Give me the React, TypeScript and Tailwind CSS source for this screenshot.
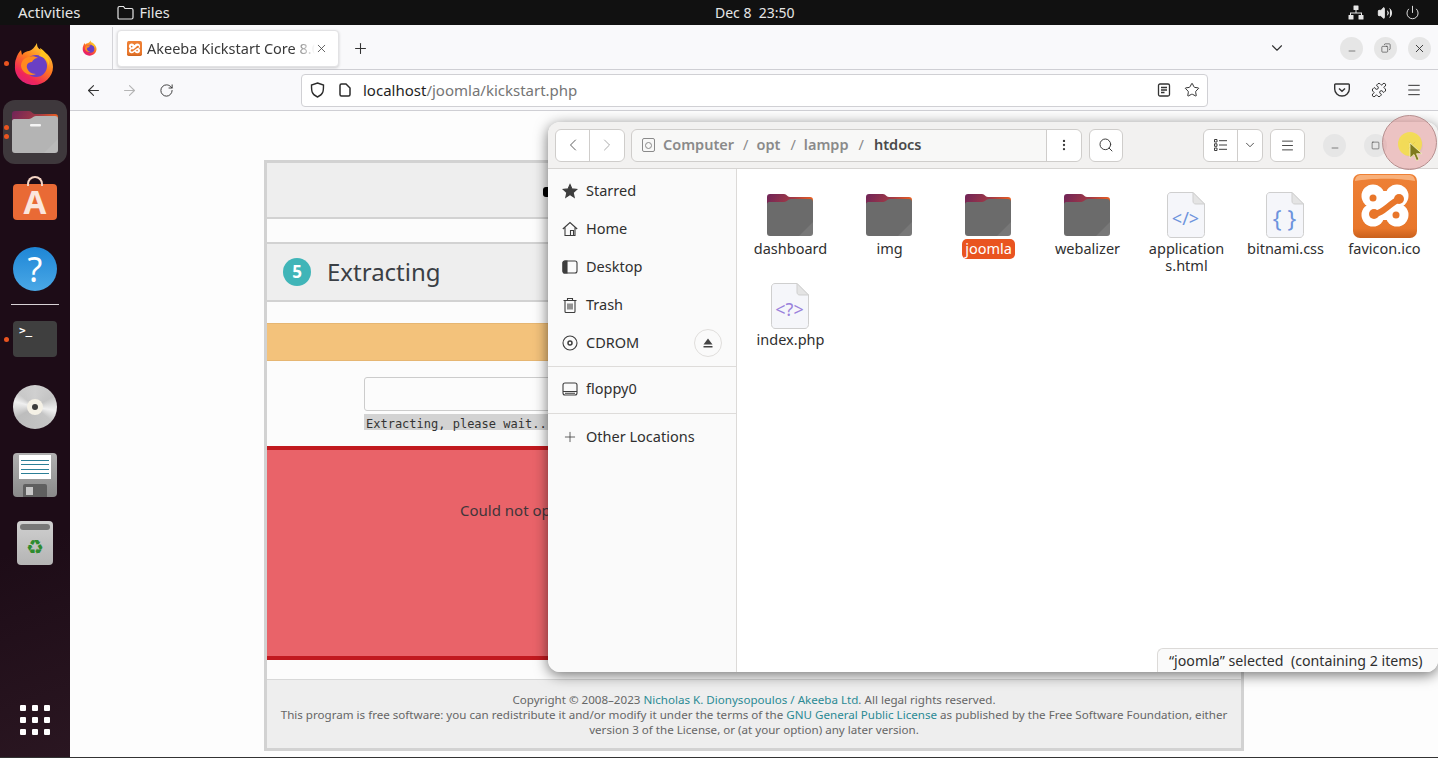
import {
  ArrowLeft,
  ArrowRight,
  ChevronDown,
  ChevronLeft,
  ChevronRight,
  Copy,
  EllipsisVertical,
  Menu,
  Minus,
  Plus,
  Power,
  Puzzle,
  RotateCw,
  Search,
  Square,
  Star,
  Volume2,
  X,
} from "lucide-react";

const sidebarTop = [
  { label: "Starred", icon: "star" },
  { label: "Home", icon: "home" },
  { label: "Desktop", icon: "desktop" },
  { label: "Trash", icon: "trash" },
];

const files = [
  { name: "dashboard", kind: "folder" },
  { name: "img", kind: "folder" },
  { name: "joomla", kind: "folder", selected: true },
  { name: "webalizer", kind: "folder" },
  { name: "application\ns.html", kind: "html" },
  { name: "bitnami.css", kind: "css" },
  { name: "favicon.ico", kind: "xampp" },
  { name: "index.php", kind: "php" },
];

function FirefoxLogo({ size }: { size: number }) {
  return (
    <svg width={size} height={size} viewBox="0 0 44 44">
      <defs>
        <linearGradient id={`ffa${size}`} x1="0.8" y1="0" x2="0.2" y2="1">
          <stop offset="0" stopColor="#ffe03c" />
          <stop offset="0.45" stopColor="#ff7a1f" />
          <stop offset="0.8" stopColor="#f0265a" />
          <stop offset="1" stopColor="#d9207e" />
        </linearGradient>
      </defs>
      <path
        d="M3 17c1-4 3-7 5-9l1 5c2-3 5-4 7-4 3-1 6-4 8-8 0 4 1 5 4 7 7 3 12 10 12 17 0 10-9 18-19 18C10 43 1 34 2 24c0-3 0-5 1-7z"
        fill={`url(#ffa${size})`}
      />
      <circle cx="23" cy="24" r="11" fill="#6a3fc4" />
      <path d="M11 17c4-3 10-4 14-1-3 0-5 2-6 4-3 0-6 2-5 6 1 3 4 6 9 6-6 3-14-1-15-8 0-3 1-5 3-7z" fill="#ff8a1f" />
      <path d="M27 6c5 3 10 9 9 18-1-6-5-9-10-10 2-2 2-5 1-8z" fill="#ffc41f" />
    </svg>
  );
}

function FolderIcon({ dark }: { dark?: boolean }) {
  const id = dark ? "folder-dark" : "folder-tile";
  return (
    <svg width="46" height="42" viewBox="0 0 46 42">
      <defs>
        <linearGradient id={id} x1="0" y1="0" x2="1" y2="0.25">
          <stop offset="0" stopColor="#6f2458" />
          <stop offset="0.6" stopColor="#a33a45" />
          <stop offset="1" stopColor="#ea5f20" />
        </linearGradient>
      </defs>
      <path d="M3 0h14c3 0 3 3 6 3h20c2 0 3 1 3 3v12H0V3c0-2 1-3 3-3z" fill={`url(#${id})`} />
      <path
        d="M0 10c0-1 1-2 2-2h15c3 0 4-3 7-3h19c2 0 3 1 3 3v31c0 2-1 3-3 3H3c-2 0-3-1-3-3z"
        fill={dark ? "#6b6b6b" : "#b4b4b4"}
      />
      <path d="M46 28v11c0 2-1 3-3 3H32z" fill="#fff" opacity="0.09" />
      {!dark && <rect x="18" y="13" width="11" height="2.5" rx="1" fill="#f4f4f4" />}
    </svg>
  );
}

function DocIcon({ kind }: { kind: string }) {
  const color = kind === "php" ? "#9a82dc" : "#6d93dd";
  const label = kind === "php" ? "<?>" : kind === "css" ? "{ }" : "</>";
  return (
    <div className="relative mr-[2px] h-[46px] w-[38px]">
      <svg width="38" height="46" viewBox="0 0 38 46" className="absolute inset-0">
        <path
          d="M4 .5h22L37.5 12v29.5c0 2-1.500 4-3.500 4H4c-2 0-3.500-2-3.500-4V4C.5 2 2 .5 4 .5z"
          fill="#f5f6fa"
          stroke="#cfcfcf"
        />
        <path d="M26 .5V9c0 2 1 3 3 3h8.500z" fill="#e4e4e4" stroke="#cfcfcf" />
      </svg>
      <span
        className={`absolute inset-x-0 top-[14px] text-center leading-[24px] whitespace-nowrap ${
          kind === "css" ? "text-[23px]" : "text-[18px]"
        }`}
        style={{ color }}
      >
        {label}
      </span>
    </div>
  );
}

function XamppIcon({ size, flat }: { size: number; flat?: boolean }) {
  const id = flat ? "xampp-small" : "xampp-large";
  return (
    <svg width={size} height={size} viewBox="0 0 64 64">
      <defs>
        <linearGradient id={id} x1="0" y1="0" x2="0" y2="1">
          <stop offset="0" stopColor="#ee8136" />
          <stop offset="0.85" stopColor="#e8762a" />
          <stop offset="1" stopColor="#c9601c" />
        </linearGradient>
      </defs>
      <rect width="64" height="64" rx="7" fill={`url(#${id})`} />
      {!flat && <path d="M8 1h48c3 0 6 2 6 6-16-3-44-3-60 0 0-4 3-6 6-6z" fill="#f8b07a" />}
      <g fill="#fff">
        <circle cx="20" cy="22" r="11.500" />
        <circle cx="44" cy="22" r="11.500" />
        <circle cx="20" cy="41" r="11.500" />
        <circle cx="44" cy="41" r="11.500" />
        <rect x="16" y="17" width="32" height="29" />
      </g>
      <g fill="#e8762a">
        <circle cx="20" cy="24" r="3.500" />
        <circle cx="21" cy="40" r="5" />
        <circle cx="46" cy="25" r="5" />
        <circle cx="43" cy="41" r="3.500" />
      </g>
      <path d="M21 40C29 40 35 31 46 25" fill="none" stroke="#e8762a" strokeWidth="6" />
    </svg>
  );
}

function WindowButton({ children, size = "w-[23px] h-[23px]" }: { children: React.ReactNode; size?: string }) {
  return <div className={`${size} rounded-full bg-[#e6e6e6] grid place-items-center text-[#3d3d3d]`}>{children}</div>;
}

function TopBar() {
  return (
    <div className="relative flex h-[25px] shrink-0 items-center bg-[#111111] text-[15px] text-[#e6e6e6]">
      <span className="ml-[18px]">Activities</span>
      <svg width="17" height="15" viewBox="0 0 17 15" fill="none" stroke="#e6e6e6" strokeWidth="1.200" className="ml-[36px]">
        <path d="M1 3c0-1 .6-1.500 1.500-1.500h4L8 3.500h6.500c1 0 1.500.5 1.500 1.500v7.500c0 1-.5 1.500-1.500 1.500h-12C1.600 14 1 13.500 1 12.500z" />
      </svg>
      <span className="ml-[6px] text-[14.500px]">Files</span>
      <span className="absolute left-[715px] whitespace-pre text-[14px]">Dec 8  23:50</span>
      <div className="ml-auto mr-[18px] flex items-center">
        <svg width="16" height="15" viewBox="0 0 16 15" fill="#e6e6e6">
          <rect x="5.500" y="0.500" width="5" height="4.500" rx="0.500" />
          <rect x="0.500" y="10" width="5" height="4.500" rx="0.500" />
          <rect x="10.500" y="10" width="5" height="4.500" rx="0.500" />
          <path d="M7.500 5h1v2.500H14V10h-1V8.500H3V10H2V7.500h5.500z" />
        </svg>
        <Volume2 className="ml-[13px] h-[16px] w-[16px]" fill="#e6e6e6" strokeWidth={1.5} />
        <Power className="ml-[12px] h-[15px] w-[15px]" strokeWidth={1.5} />
      </div>
    </div>
  );
}

function Dock() {
  return (
    <aside className="relative flex w-[70px] shrink-0 flex-col items-center bg-[linear-gradient(160deg,#1d0c17_70%,#2a1621_100%)] pt-[17px]">
      <span className="absolute left-[4px] top-[36px] h-[5px] w-[5px] rounded-full bg-[#e95420]" />
      <span className="absolute left-[4px] top-[100px] h-[5px] w-[5px] rounded-full bg-[#e95420]" />
      <span className="absolute left-[4px] top-[109px] h-[5px] w-[5px] rounded-full bg-[#e95420]" />
      <span className="absolute left-[4px] top-[312px] h-[5px] w-[5px] rounded-full bg-[#e95420]" />
      <FirefoxLogo size={44} />
      <div className="mt-[14px] grid h-[64px] w-[64px] place-items-center rounded-[12px] bg-[#3e383c]">
        <FolderIcon />
      </div>
      <div className="relative mt-[12px] flex h-[44px] w-[44px] flex-col items-center justify-end">
        <div className="absolute top-0 h-[10px] w-[16px] rounded-t-[8px] border-2 border-b-0 border-[#f5d5c4]" />
        <div className="grid h-[36px] w-[44px] place-items-center rounded-[4px] bg-[#e96a35]">
          <span className="text-[33px] font-bold leading-[36px] text-[#fbe6dc]">A</span>
        </div>
      </div>
      <div className="mt-[27px] grid h-[44px] w-[44px] place-items-center rounded-full bg-[linear-gradient(180deg,#1e86d6,#4aa8e6)]">
        <span className="text-[34px] leading-[40px] text-white">?</span>
      </div>
      <div className="mt-[13px] h-px w-[48px] bg-[#d8d2d6]" />
      <div className="mt-[16px] h-[36px] w-[44px] rounded-[4px] bg-[#3f3f3f] pl-[6px] font-['DejaVu_Sans_Mono',monospace] text-[11px] font-bold leading-[20px] text-white">
        &gt;_
      </div>
      <div className="mt-[28px] grid h-[44px] w-[44px] place-items-center rounded-full bg-[conic-gradient(#d0d0d0_0deg,#c4c4c4_60deg,#f0f0f0_100deg,#c6c6c6_130deg,#bdbdbd_240deg,#f0f0f0_285deg,#c8c8c8_310deg,#d0d0d0_360deg)]">
        <div className="grid h-[16px] w-[16px] place-items-center rounded-full bg-[#f5f1e6]">
          <div className="h-[6px] w-[6px] rounded-full bg-[#3c3c3c]" />
        </div>
      </div>
      <div className="relative mt-[24px] h-[44px] w-[44px] rounded-[4px] bg-[linear-gradient(180deg,#b0b0b0,#8a8a8a)]">
        <div className="mx-auto mt-[2px] flex h-[24px] w-[32px] flex-col justify-evenly bg-white py-[2px]">
          <div className="mx-[2px] h-px bg-[#2b7f97]" />
          <div className="mx-[2px] h-px bg-[#2b7f97]" />
          <div className="mx-[2px] h-px bg-[#2b7f97]" />
          <div className="mx-[2px] h-px bg-[#2b7f97]" />
        </div>
        <div className="absolute bottom-0 left-[10px] h-[13px] w-[24px] rounded-t-[2px] bg-[#5f5f5f]">
          <div className="ml-[3px] mt-[3px] h-[8px] w-[7px] bg-[#c8c8c8]" />
        </div>
      </div>
      <div className="mt-[24px] flex h-[44px] w-[36px] flex-col items-center rounded-[4px] bg-[linear-gradient(180deg,#d0d0d0,#b4b4b4)] pt-[3px]">
        <div className="h-[6px] w-[30px] rounded-[3px] bg-[#777777]" />
        <span className="mt-[7px] text-[20px] leading-[20px] text-[#2e8b2e]">♻</span>
      </div>
      <div className="mt-auto mb-[22px] grid grid-cols-3 gap-[6px]">
        {Array.from({ length: 9 }).map((_, i) => (
          <div key={i} className="h-[6px] w-[6px] rounded-[1px] bg-white" />
        ))}
      </div>
    </aside>
  );
}

function BrowserChrome() {
  return (
    <>
      <div className="flex h-[45px] shrink-0 items-center border-b border-[#cfcfd4] bg-[#f9f9fb] pt-[2px]">
        <div className="ml-[12px] w-[30px]">
          <FirefoxLogo size={16} />
        </div>
        <div className="h-[42px] w-px bg-[#d4d4d8]" />
        <div className="ml-[4px] flex h-[37px] w-[222px] items-center rounded-[4px] border border-[#e2e2e4] bg-white pl-[9px] shadow-[0_1px_3px_rgba(0,0,0,0.18)]">
          <XamppIcon size={15} flat />
          <span className="ml-[5px] w-[168px] overflow-hidden whitespace-nowrap pt-px text-[14.500px] text-[#3a3a3a] [mask-image:linear-gradient(90deg,#000_92%,transparent_100%)]">
            Akeeba Kickstart Core <span className="text-[#9a9a9a]">8.0.1</span>
          </span>
          <X className="h-[13px] w-[13px] text-[#444444]" strokeWidth={1.5} />
        </div>
        <Plus className="ml-[13px] h-[17px] w-[17px] text-[#333333]" strokeWidth={1.5} />
        <ChevronDown className="ml-[899px] h-[18px] w-[18px] text-[#333333]" strokeWidth={1.5} />
        <div className="ml-[54px] flex gap-[11px]">
          <WindowButton>
            <Minus className="mt-[6px] h-[10px] w-[10px]" strokeWidth={1.5} />
          </WindowButton>
          <WindowButton>
            <Copy className="h-[10px] w-[10px] -scale-x-100" strokeWidth={1.5} />
          </WindowButton>
          <WindowButton>
            <X className="h-[13px] w-[13px]" strokeWidth={1.8} />
          </WindowButton>
        </div>
      </div>
      <div className="flex h-[41px] shrink-0 items-center border-b border-[#cfcfd4] bg-[#f9f9fb] text-[#333333]">
        <ArrowLeft className="ml-[15px] h-[17px] w-[17px]" strokeWidth={1.5} />
        <ArrowRight className="ml-[19px] h-[17px] w-[17px] text-[#b5b5b5]" strokeWidth={1.5} />
        <RotateCw className="ml-[21px] h-[15px] w-[15px]" strokeWidth={1.5} />
        <div className="ml-[127px] flex h-[33px] w-[907px] items-center rounded-[4px] border border-[#d0d0d4] bg-white pl-[8px]">
          <svg width="15" height="16" viewBox="0 0 15 16" fill="none" stroke="#2b2b2b" strokeWidth="1.400">
            <path d="M7.500 1 13.500 3c0 6 0 9.500-6 12C1.500 12.500 1.500 9 1.500 3z" />
          </svg>
          <svg width="12" height="14" viewBox="0 0 12 14" fill="none" stroke="#2b2b2b" strokeWidth="1.500" className="ml-[14px]">
            <path d="M1 2.500C1 1.500 1.500 1 2.500 1H7l4 4v6.500c0 1-.5 1.500-1.500 1.500h-7C1.500 13 1 12.500 1 11.500z" />
          </svg>
          <span className="ml-[12px] text-[15px]">
            <span className="text-[#1f1f1f]">localhost</span>
            <span className="text-[#757575]">/joomla/kickstart.php</span>
          </span>
          <svg width="14" height="14" viewBox="0 0 14 14" fill="none" stroke="#333" strokeWidth="1.300" className="ml-auto">
            <rect x="1.500" y="1" width="11" height="12" rx="1.500" />
            <path d="M4 4.500h6M4 7h6M4 9.500h3.500" />
          </svg>
          <Star className="ml-[13px] mr-[7px] h-[16px] w-[16px]" strokeWidth={1.5} />
        </div>
        <svg width="16" height="14" viewBox="0 0 16 14" fill="none" stroke="#333" strokeWidth="1.400" className="ml-[126px]">
          <path d="M1.500 1h13c.5 0 .8.3.8.8V6a7.300 7 0 0 1-14.600 0V1.800c0-.5.3-.8.8-.8z" />
          <path d="M5 5.500 8 8.300l3-2.800" />
        </svg>
        <Puzzle className="ml-[21px] h-[16px] w-[16px]" strokeWidth={1.5} />
        <Menu className="ml-[19px] h-[16px] w-[16px]" strokeWidth={1.5} />
      </div>
    </>
  );
}

function KickstartPage() {
  return (
    <div className="min-h-0 flex-1 overflow-hidden bg-[#fdfdfd] pt-[49px]">
      <div className="mx-auto flex h-[591px] w-[980px] flex-col border-[3px] border-[#d2d2d2] bg-[#fcfcfc]">
        <div className="box-content h-[54px] shrink-0 border-b-2 border-[#d2d2d2] bg-[#eeeeee] pl-[276px] pt-0">
          <div className="mt-[24px] h-[10px] w-[5px] rounded-l-[3px] bg-black" />
        </div>
        <div className="h-[23px] shrink-0" />
        <div className="box-content flex h-[56px] shrink-0 items-center border-y-2 border-[#d2d2d2] bg-[#eeeeee]">
          <div className="ml-[16px] grid h-[28px] w-[28px] place-items-center rounded-full bg-[#40b5b8] text-[17px] font-bold text-white">
            5
          </div>
          <span className="ml-[16px] text-[24px] leading-none text-[#3a3f45]">Extracting</span>
        </div>
        <div className="h-[21px] shrink-0" />
        <div className="h-[38px] shrink-0 border-y border-[#e6b672] bg-[#f3c27b]" />
        <div className="flex h-[85px] shrink-0 flex-col pl-[97px] pt-[16px]">
          <div className="h-[34px] w-[780px] rounded-[3px] border border-[#cccccc] bg-[#fcfcfc]" />
          <div className="mt-[3px] h-[16px] w-fit bg-[#d3d3d3] pl-[2px] pt-px font-['DejaVu_Sans_Mono',monospace] text-[12px] leading-[18px] text-[#333333]">
            Extracting, please wait...
          </div>
        </div>
        <div className="h-[214px] shrink-0 border-y-4 border-[#c1191f] bg-[#e96369] pl-[193px] pt-[48px] text-[15px] leading-[24px] text-[#40363a] whitespace-nowrap">
          Could not open the archive
        </div>
        <div className="h-[19px] shrink-0" />
        <footer className="flex flex-1 flex-col items-center border-t border-[#d8d8d8] bg-[#eeeeee] pt-[12px] text-center text-[11.600px] leading-[15px] text-[#666666]">
          <p>
            Copyright © 2008–2023 <span className="text-[#2b8a94]">Nicholas K. Dionysopoulos / Akeeba Ltd</span>. All legal rights reserved.
          </p>
          <p className="w-[960px]">
            This program is free software: you can redistribute it and/or modify it under the terms of the{" "}
            <span className="text-[#2b8a94]">GNU General Public License</span> as published by the Free Software Foundation, either version 3 of the
            License, or (at your option) any later version.
          </p>
        </footer>
      </div>
    </div>
  );
}

function SidebarIcon({ icon }: { icon: string }) {
  const common = { width: 16, height: 16, viewBox: "0 0 16 16", fill: "none", stroke: "#3d3d3d", strokeWidth: 1.1 };
  if (icon === "star")
    return (
      <svg {...common} fill="#3d3d3d">
        <path d="m8 1.500 2 4.400 4.800.5-3.600 3.200 1 4.700L8 11.500l-4.200 2.800 1-4.700L1.200 6.400 6 5.900z" />
      </svg>
    );
  if (icon === "home")
    return (
      <svg {...common}>
        <path d="M.8 8 8 1.500 15.200 8M3 6.500v8h10v-8M8.500 14.500v-5h3v5" />
      </svg>
    );
  if (icon === "desktop")
    return (
      <svg {...common}>
        <rect x="1" y="2" width="14" height="12" rx="2" />
        <path d="M1 4c0-1 1-2 2-2h2v12H3c-1 0-2-1-2-2z" fill="#3d3d3d" />
      </svg>
    );
  if (icon === "trash")
    return (
      <svg {...common}>
        <path d="M1.500 3.500h13M5.500 3.500V1.500h5v2M3 3.500v11c0 .5.500 1 1 1h8c.5 0 1-.5 1-1v-11M6 6.500v6M8 6.500v6M10 6.500v6" />
      </svg>
    );
  if (icon === "disc")
    return (
      <svg {...common}>
        <circle cx="8" cy="8" r="7" />
        <circle cx="8" cy="8" r="2" strokeWidth="1.500" />
      </svg>
    );
  return (
    <svg {...common}>
      <rect x="1" y="2" width="14" height="12" rx="2" />
      <path d="M1 10.500h14M3 12.300h10" />
    </svg>
  );
}

function SidebarRow({ label, icon, className = "" }: { label: string; icon: string; className?: string }) {
  return (
    <div className={`flex h-[38px] items-center pl-[14px] text-[14.500px] text-[#2f2f2f] ${className}`}>
      <SidebarIcon icon={icon} />
      <span className="ml-[8px]">{label}</span>
    </div>
  );
}

function FileCell({ file }: { file: (typeof files)[number] }) {
  return (
    <div className="flex flex-col items-center">
      <div className="grid h-[64px] w-[64px] shrink-0 items-end justify-items-center">
        {file.kind === "folder" && (
          <div className="mb-[2px] mr-[2px]">
            <FolderIcon dark />
          </div>
        )}
        {file.kind === "xampp" && <XamppIcon size={64} />}
        {(file.kind === "html" || file.kind === "css" || file.kind === "php") && <DocIcon kind={file.kind} />}
      </div>
      <span
        className={`mt-px whitespace-pre-line px-[3px] pb-[2px] pt-px text-center text-[14.500px] leading-[17px] ${
          file.selected ? "rounded-[5px] bg-[#e95420] text-white" : "text-[#2f2f2f]"
        }`}
      >
        {file.name}
      </span>
    </div>
  );
}

function FilesWindow() {
  return (
    <div className="absolute left-[548px] top-[122px] flex h-[550px] w-[890px] flex-col overflow-hidden rounded-[12px] bg-[#fafafa] shadow-[0_3px_14px_rgba(0,0,0,0.55)]">
      <div className="flex h-[47px] shrink-0 items-center border-b border-[#d6d4d2] bg-[#f2f1f0] text-[#3d3d3d]">
        <div className="ml-[7px] flex h-[33px] w-[70px] rounded-[6px] border border-[#cfcdcb] bg-white">
          <div className="grid w-[34px] place-items-center border-r border-[#cfcdcb]">
            <ChevronLeft className="h-[20px] w-[20px]" strokeWidth={1} />
          </div>
          <div className="grid flex-1 place-items-center text-[#9a9a9a]">
            <ChevronRight className="h-[20px] w-[20px]" strokeWidth={1} />
          </div>
        </div>
        <div className="ml-[6px] flex h-[33px] w-[451px] items-center rounded-[6px] border border-[#cfcdcb] bg-[#f8f8f7] pl-[10px] text-[14.500px] font-semibold">
          <div className="grid h-[14px] w-[13px] place-items-center rounded-[2px] border border-[#8a8a8a]">
            <div className="h-[7px] w-[7px] rounded-full border border-[#8a8a8a]" />
          </div>
          <span className="ml-[8px] text-[#8a8a8a]">Computer</span>
          <span className="ml-[9px] font-normal text-[#8a8a8a]">/</span>
          <span className="ml-[8px] text-[#8a8a8a]">opt</span>
          <span className="ml-[10px] font-normal text-[#8a8a8a]">/</span>
          <span className="ml-[8px] text-[#8a8a8a]">lampp</span>
          <span className="ml-[10px] font-normal text-[#8a8a8a]">/</span>
          <span className="ml-[10px] text-[#4a4a4a]">htdocs</span>
          <div className="ml-auto grid h-full w-[35px] place-items-center rounded-r-[6px] border-l border-[#cfcdcb] bg-white">
            <EllipsisVertical className="h-[14px] w-[14px]" strokeWidth={2} />
          </div>
        </div>
        <div className="ml-[7px] grid h-[33px] w-[34px] place-items-center rounded-[6px] border border-[#cfcdcb] bg-white">
          <Search className="h-[16px] w-[16px]" strokeWidth={1.5} />
        </div>
        <div className="ml-[80px] flex h-[33px] w-[60px] rounded-[6px] border border-[#cfcdcb] bg-white">
          <div className="grid w-[34px] place-items-center border-r border-[#cfcdcb]">
            <svg width="13" height="12" viewBox="0 0 13 12" fill="none" stroke="#3d3d3d">
              <path d="M.5.500h2.500V3H.5zM.5 4.800h2.500v2.500H.5zM.5 9h2.500v2.500H.5zM5 1.700h8M5 6h8M5 10.300h8" />
            </svg>
          </div>
          <div className="grid flex-1 place-items-center">
            <ChevronDown className="h-[14px] w-[14px]" strokeWidth={1.5} />
          </div>
        </div>
        <div className="ml-[7px] grid h-[33px] w-[35px] place-items-center rounded-[6px] border border-[#cfcdcb] bg-white">
          <Menu className="h-[15px] w-[15px]" strokeWidth={1.5} />
        </div>
        <div className="ml-[18px] flex items-center">
          <WindowButton>
            <Minus className="mt-[6px] h-[10px] w-[10px]" strokeWidth={1.5} />
          </WindowButton>
          <div className="ml-[18px]">
            <WindowButton>
              <Square className="h-[9px] w-[9px]" strokeWidth={1.5} />
            </WindowButton>
          </div>
          <div className="ml-[13px]">
            <WindowButton>
              <X className="h-[12px] w-[12px]" strokeWidth={1.5} />
            </WindowButton>
          </div>
        </div>
      </div>
      <div className="flex min-h-0 flex-1">
        <nav className="w-[189px] shrink-0 border-r border-[#dcdad8] bg-[#fafafa] pt-[3px]">
          {sidebarTop.map((item) => (
            <SidebarRow key={item.label} label={item.label} icon={item.icon} />
          ))}
          <div className="relative border-b border-[#dedcda] pb-[4px]">
            <SidebarRow label="CDROM" icon="disc" />
            <div className="absolute right-[14px] top-[5px] grid h-[28px] w-[28px] place-items-center rounded-full border border-[#e0dedc]">
              <svg width="10" height="10" viewBox="0 0 10 10" fill="#444">
                <path d="M5 0.500 9.500 6.500H.5zM.5 8h9v1.500h-9z" />
              </svg>
            </div>
          </div>
          <div className="border-b border-[#dedcda] pb-[5px] pt-[3px]">
            <SidebarRow label="floppy0" icon="drive" />
          </div>
          <div className="flex h-[45px] items-center pl-[14px] text-[14.500px] text-[#2f2f2f]">
            <Plus className="h-[16px] w-[16px] text-[#3d3d3d]" strokeWidth={1.2} />
            <span className="ml-[8px]">Other Locations</span>
          </div>
        </nav>
        <div className="relative flex-1 bg-white pl-[4px] pt-[5px]">
          <div className="grid auto-rows-[91px] grid-cols-[repeat(7,99px)]">
            {files.map((file) => (
              <FileCell key={file.name} file={file} />
            ))}
          </div>
        </div>
      </div>
      <div className="absolute bottom-0 right-0 h-[24px] w-[281px] rounded-tl-[6px] border-l border-t border-[#dcdad8] bg-[#fafafa] pl-[11px] text-[14.200px] leading-[24px] text-[#2f2f2f] whitespace-pre">
        “joomla” selected  (containing 2 items)
      </div>
    </div>
  );
}

function CursorHighlight() {
  return (
    <div className="absolute left-[1382px] top-[115px] h-[55px] w-[55px] rounded-full border border-[#b58e8e] bg-[rgba(226,120,120,0.38)]">
      <div className="absolute left-[15px] top-[16px] h-[24px] w-[24px] rounded-full bg-[rgba(245,225,70,0.85)]" />
      <svg width="14" height="20" viewBox="0 0 14 20" className="absolute left-[26px] top-[26px]">
        <path d="M1 1v15l4-3.500 2.500 6 2.500-1-2.500-5.800H13z" fill="#7f7a1e" stroke="#f3f0c0" strokeWidth="0.800" />
      </svg>
    </div>
  );
}

export default function App() {
  return (
    <div className="relative flex h-[758px] w-[1438px] flex-col overflow-hidden bg-[#333333] font-['Noto_Sans',sans-serif]">
      <TopBar />
      <div className="flex h-[732px] min-h-0 shrink-0">
        <Dock />
        <main className="flex min-w-0 flex-1 flex-col">
          <BrowserChrome />
          <KickstartPage />
        </main>
      </div>
      <FilesWindow />
      <CursorHighlight />
    </div>
  );
}
